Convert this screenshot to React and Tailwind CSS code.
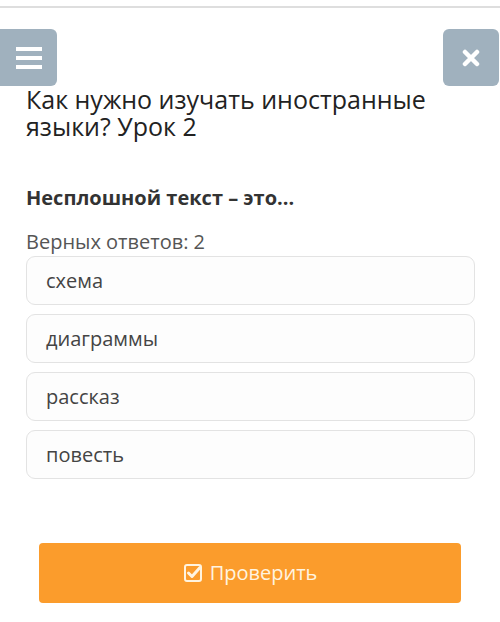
import React from 'react';

const options = ['схема', 'диаграммы', 'рассказ', 'повесть'];

const App = () => {
  return (
    <div className="w-[500px] h-[622px] bg-white overflow-hidden" style={{ fontFamily: '"Open Sans", "Noto Sans", sans-serif' }}>
      {/* Top rule */}
      <div className="h-[6px]" />
      <div className="h-[2px] bg-[#dedede]" />

      {/* Header buttons */}
      <div className="flex justify-between mt-[21px]">
        <button className="w-[57px] h-[57px] bg-[#a0b1be] rounded-r-[6px] flex flex-col items-center justify-center gap-[5px]">
          <span className="block w-[26px] h-[4px] bg-white" />
          <span className="block w-[26px] h-[4px] bg-white" />
          <span className="block w-[26px] h-[4px] bg-white" />
        </button>
        <button className="w-[56px] h-[57px] mr-[1px] bg-[#a0b1be] rounded-[6px] flex items-center justify-center">
          <svg width="18" height="18" viewBox="0 0 18 18">
            <path d="M3 3 L15 15 M15 3 L3 15" stroke="white" strokeWidth="4.5" strokeLinecap="round" />
          </svg>
        </button>
      </div>

      <div className="px-[26px]">
        {/* Title */}
        <h1 className="text-[25px] leading-[27px] text-[#222] font-normal">
          Как нужно изучать иностранные языки? Урок 2
        </h1>

        {/* Question */}
        <p className="mt-[45px] text-[20px] leading-[26px] font-bold text-[#333]">
          Несплошной текст – это...
        </p>
        <p className="mt-[19px] text-[20px] leading-[24px] text-[#555]">Верных ответов: 2</p>

        {/* Options */}
        <div className="flex flex-col gap-[9px] mt-[2px] w-[449px]">
          {options.map((opt) => (
            <div
              key={opt}
              className="h-[49px] border border-[#e3e3e3] rounded-[9px] bg-[#fdfdfd] flex items-center pl-[19px] text-[20px] text-[#444]"
            >
              {opt}
            </div>
          ))}
        </div>
      </div>

      {/* Submit */}
      <div className="px-[39px] mt-[64px]">
        <button className="w-[422px] h-[60px] bg-[#fb9c2c] rounded-[4px] flex items-center justify-center gap-[7px] text-[20px] text-[#fff4e0]">
          <svg width="20" height="20" viewBox="0 0 20 20">
            <rect x="2" y="2" width="16" height="16" rx="2" fill="none" stroke="#fff4e0" strokeWidth="2" />
            <path d="M5.5 10 L9 13.5 L17 4.5" fill="none" stroke="#fff4e0" strokeWidth="3" strokeLinecap="round" strokeLinejoin="round" />
          </svg>
          <span>Проверить</span>
        </button>
      </div>
    </div>
  );
};

export default App;
